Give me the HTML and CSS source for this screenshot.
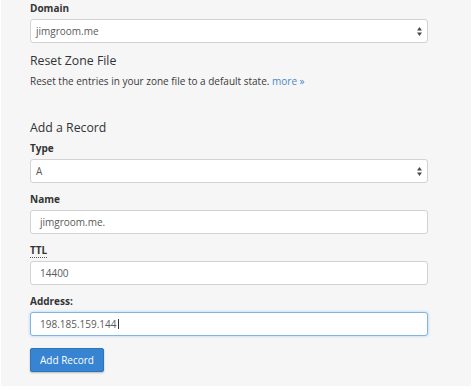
FILE: index.html
```html
<!DOCTYPE html>
<html lang="en">
<head>
<meta charset="utf-8">
<title>Zone Editor</title>
<link rel="stylesheet" href="styles.css">
</head>
<body>
<div class="panel">
  <div class="group">
    <label class="label">Domain</label>
    <div class="control select">
      <span class="value">jimgroom.me</span>
      <svg class="arrows" width="5" height="9" viewBox="0 0 5 9"><path d="M2.5 0 L5 3.4 L0 3.4 Z M0 5.6 L5 5.6 L2.5 9 Z" fill="#4a4a4a"/></svg>
    </div>
  </div>
  <h3 class="heading first">Reset Zone File</h3>
  <p class="desc">Reset the entries in your zone file to a default state. <a class="more" href="#">more »</a></p>

  <h3 class="heading second">Add a Record</h3>
  <div class="group">
    <label class="label">Type</label>
    <div class="control select">
      <span class="value">A</span>
      <svg class="arrows" width="5" height="9" viewBox="0 0 5 9"><path d="M2.5 0 L5 3.4 L0 3.4 Z M0 5.6 L5 5.6 L2.5 9 Z" fill="#4a4a4a"/></svg>
    </div>
  </div>
  <div class="group">
    <label class="label">Name</label>
    <div class="control input"><span class="value">jimgroom.me.</span></div>
  </div>
  <div class="group">
    <label class="label"><abbr class="abbr">TTL</abbr></label>
    <div class="control input"><span class="value">14400</span></div>
  </div>
  <div class="group last">
    <label class="label">Address:</label>
    <div class="control input focused"><span class="value">198.185.159.144</span><span class="caret"></span></div>
  </div>
  <button class="btn" type="button">Add Record</button>
</div>
</body>
</html>
```

FILE: styles.css
```css
html, body {
  margin: 0;
  padding: 0;
  background: #ffffff;
}
body {
  font-family: "Open Sans", "Liberation Sans", sans-serif;
  font-size: 10px;
  color: #333333;
}
.panel {
  margin-left: 1px;
  width: 441px;
  padding: 0 0 14px 29px;
  background: #f6f6f6;
}
.group {
  margin-bottom: 8px;
}
.group.last {
  margin-bottom: 12px;
}
.label {
  display: block;
  font-weight: 700;
  font-size: 10px;
  line-height: 16px;
  margin-bottom: 3px;
  color: #333;
}
.abbr {
  text-decoration: none;
  border-bottom: 1px dotted #555;
}
.control {
  box-sizing: border-box;
  width: 398px;
  height: 24px;
  background: #ffffff;
  border: 1px solid #d2d2d2;
  border-radius: 3px;
  display: flex;
  align-items: center;
  color: #5a5a5a;
  font-size: 10px;
}
.select {
  padding: 0 5px 0 5px;
  justify-content: space-between;
}
.input {
  padding: 0 9px;
}
.arrows {
  display: block;
}
.focused {
  border-color: #7fb5e6;
  box-shadow: 0 0 3px rgba(102, 175, 233, 0.55);
}
.caret {
  display: inline-block;
  width: 1px;
  height: 10px;
  background: #333;
  margin-left: 1px;
}
.heading {
  margin: 0;
  font-weight: 400;
  font-size: 12.3px;
  line-height: 18px;
  color: #333;
}
.heading.first {
  padding-top: 1px;
}
.desc {
  margin: 4px 0 0 0;
  font-size: 10px;
  line-height: 15px;
  color: #3a3a3a;
}
.more {
  color: #4a89c8;
  text-decoration: none;
}
.heading.second {
  margin-top: 30px;
  margin-bottom: 3px;
}
.btn {
  display: block;
  margin: 0;
  height: 24px;
  padding: 0 9px;
  background: #3784d2;
  border: 1px solid #2f74bd;
  border-radius: 2px;
  box-shadow: 0 1px 2px rgba(0, 0, 0, 0.25);
  color: #ffffff;
  font-family: "Open Sans", "Liberation Sans", sans-serif;
  font-size: 10px;
  line-height: 22px;
}
```
